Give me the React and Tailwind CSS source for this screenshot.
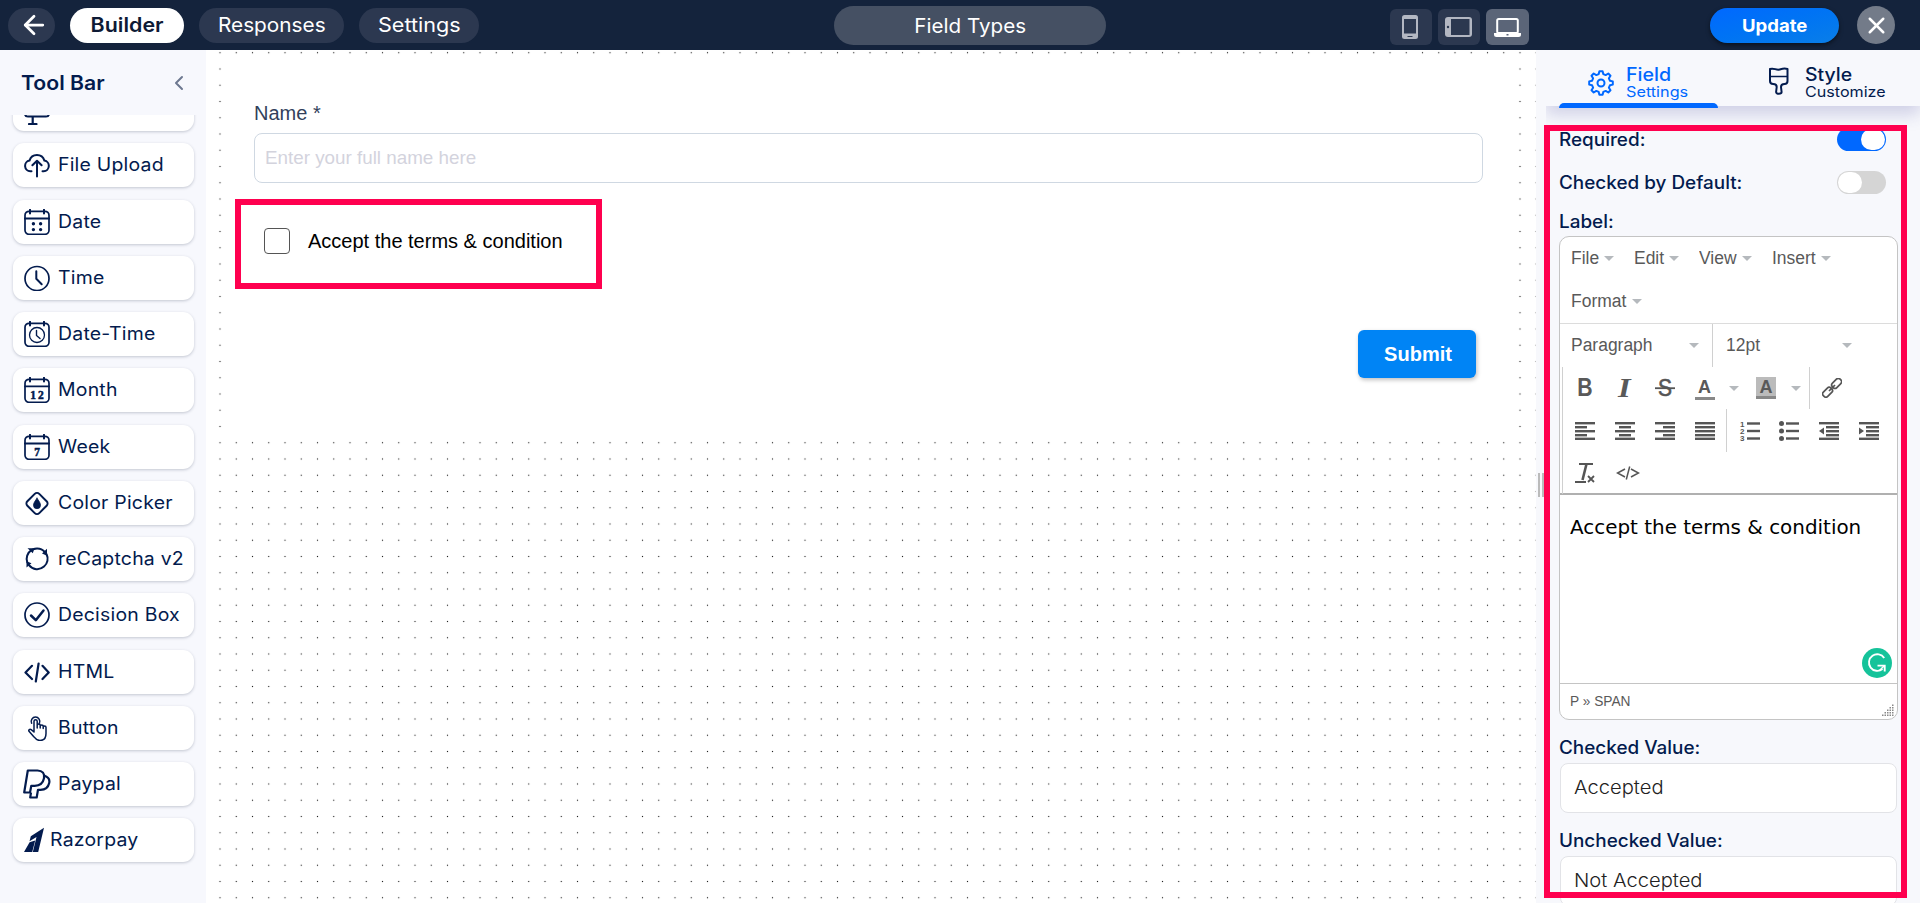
import React from "react";
import { ChevronLeft, ArrowLeft, X } from "lucide-react";

const svgProps = {
  viewBox: "0 0 26 26",
  fill: "none",
  stroke: "currentColor",
  strokeWidth: 1.7,
  strokeLinecap: "round",
  strokeLinejoin: "round",
};

function Glyph({ children }) {
  return (
    <svg {...svgProps} className="h-[26px] w-[26px] shrink-0">
      {children}
    </svg>
  );
}

const CalendarFrame = () => (
  <>
    <rect x="1" y="2.3" width="24" height="23" rx="4" />
    <path d="M6 .8v3.6M20 .8v3.6" strokeWidth="2" />
  </>
);

const digits = "fill-current stroke-current stroke-[0.5px] font-['Liberation_Serif'] font-bold";

const tools = [
  {
    label: "File Upload",
    icon: (
      <Glyph>
        <path d="M7.5 19.3H6.3a5.4 5.4 0 0 1-.8-10.7A7.8 7.8 0 0 1 20.4 8.6a5.4 5.4 0 0 1-.7 10.7h-1.2M13 24.5V9M8.4 13.3 13 8.7l4.6 4.6" strokeWidth="2" />
      </Glyph>
    ),
  },
  {
    label: "Date",
    icon: (
      <Glyph>
        <CalendarFrame />
        <path d="M1 9.6h24" strokeWidth="2" />
        <path d="M9.4 14.8h.01M16.6 14.8h.01M9.4 20.6h.01M16.6 20.6h.01" strokeWidth="3.4" />
      </Glyph>
    ),
  },
  {
    label: "Time",
    icon: (
      <Glyph>
        <circle cx="13" cy="13.5" r="12" />
        <path d="M12.3 6.3v7.5l5.4 5.5" strokeWidth="2" />
      </Glyph>
    ),
  },
  {
    label: "Date-Time",
    icon: (
      <Glyph>
        <CalendarFrame />
        <circle cx="13" cy="14" r="7.5" strokeWidth="1.3" />
        <path d="M12.5 9.5v5l3.5 3" strokeWidth="1.4" />
      </Glyph>
    ),
  },
  {
    label: "Month",
    icon: (
      <Glyph>
        <CalendarFrame />
        <path d="M1 9.4h24" />
        <text x="13" y="21.6" fontSize="11.5" textAnchor="middle" textLength="13.5" className={digits}>12</text>
      </Glyph>
    ),
  },
  {
    label: "Week",
    icon: (
      <Glyph>
        <CalendarFrame />
        <path d="M1 9.4h24" strokeWidth="2" />
        <text x="13" y="21.6" fontSize="11.5" textAnchor="middle" className={digits}>7</text>
      </Glyph>
    ),
  },
  {
    label: "Color Picker",
    icon: (
      <Glyph>
        <rect x="4.6" y="5.1" width="16.8" height="16.8" rx="3.2" transform="rotate(45 13 13.5)" strokeWidth="2" />
        <path d="M13 8.2c1.6 2.5 3.5 4.6 3.5 7a3.5 3.5 0 0 1-7 0c0-2.400 1.900-4.500 3.500-7z" fill="currentColor" strokeWidth=".8" />
      </Glyph>
    ),
  },
  {
    label: "reCaptcha v2",
    icon: (
      <Glyph>
        <path d="M5.500 5.800A10.200 10.200 0 0 1 20.800 6M22.600 8.300A10.200 10.200 0 0 1 20 20.600 10.300 10.300 0 0 1 5 19.200M3.300 16.500A10.200 10.200 0 0 1 7.500 4.200" strokeWidth="2" />
        <path d="M3.500 2.300h7l-1.700 5zM23 2.800v7l-5-2.300zM2.500 21.500v-6.300l5 2z" fill="currentColor" stroke="none" />
      </Glyph>
    ),
  },
  {
    label: "Decision Box",
    icon: (
      <Glyph>
        <circle cx="13" cy="13" r="12" />
        <path d="M7 13.500l4.800 4.700 7.700-9.700" strokeWidth="2.500" />
      </Glyph>
    ),
  },
  {
    label: "HTML",
    icon: (
      <Glyph>
        <path d="M8 6.800 1.500 13.400 8 20M18.500 6.800l6.200 6.600-6.200 6.600M14.600 4.500l-2.800 18" strokeWidth="2.200" />
      </Glyph>
    ),
  },
  {
    label: "Button",
    icon: (
      <Glyph>
        <path d="M10 16.500V6.300a1.600 1.600 0 0 1 3.200 0V12.500M13.200 13v-2.400a1.500 1.500 0 0 1 3 0V13M16.200 13v-1.600a1.500 1.500 0 0 1 3 0V13.500M19.200 13v-.7a1.400 1.400 0 0 1 2.800 0V18.500c0 4.500-2.500 7-6 7-3 0-4.400-1.500-6-3.600L5 16.300c-.8-1.500.8-2.700 2.200-1.600L10 17" strokeWidth="1.500" />
        <path d="M7.600 8.200a4.300 4.300 0 1 1 7.800 0" strokeWidth="1.500" />
      </Glyph>
    ),
  },
  {
    label: "Paypal",
    icon: (
      <svg viewBox="0 0 28 30" fill="none" stroke="currentColor" strokeWidth="2.200" strokeLinejoin="round" className="-mx-px h-[30px] w-7 shrink-0">
        <path d="M4.800 1.500H14.500c5 0 7.500 3.200 6.500 7.800-1 5-4.300 7.500-9.300 7.500H8.300L7 23.500H1.200z" />
        <path d="M21 6.500c4.500 1.500 6 4 5.200 7.500-1 4.600-4 6.800-8.700 6.800H15l-1.300 7.700H7.200L8 23.500" />
      </svg>
    ),
  },
  {
    label: "Razorpay",
    narrow: true,
    icon: (
      <svg viewBox="0 0 20 26" fill="currentColor" className="h-[26px] w-5 shrink-0">
        <path d="M20 .8 6.800 9.200 5.500 14.200 12.500 10 8.800 25h5.400zM5.600 15.200 0 25h8.200l3-11.500z" />
      </svg>
    ),
  },
];

function ToolItem({ label, icon, narrow }) {
  return (
    <li className="flex h-11 shrink-0 items-center rounded-[11px] bg-white pl-[11px] shadow-[0_1px_3px_rgba(40,50,80,0.25)]">
      {icon}
      <span className={`${narrow ? "ml-1.5" : "ml-2"} -mt-px origin-left scale-x-[1.080] text-[18px] whitespace-nowrap tracking-[0.2px]`}>{label}</span>
    </li>
  );
}

function Caret() {
  return <span className="border-x-[5px] border-t-[5px] border-x-transparent border-t-[#b5b9bd]" />;
}

function Toggle({ on }) {
  return (
    <span className={`flex h-[23px] w-[49px] items-center rounded-full p-px ${on ? "justify-end bg-[#0068ff]" : "bg-[#d5d5d5]"}`}>
      <span className="h-[21px] w-6 rounded-full bg-white" />
    </span>
  );
}

function Lines({ rows, children }) {
  return (
    <svg viewBox="0 0 20 20" className="h-5 w-5 overflow-visible" fill="#555">
      {rows.map(([x, y, w]) => (
        <rect key={`${x}-${y}`} x={x} y={y} width={w} height="2.400" />
      ))}
      {children}
    </svg>
  );
}

const five = (narrowX, narrowW) => [
  [0, 1, 20], [narrowX, 5, narrowW], [0, 9, 20], [narrowX, 13, narrowW], [0, 16.6, 20],
];

const listLines = [[7, 1.3, 13], [7, 8.8, 13], [7, 16.3, 13]];

function Cell({ children, className = "w-10" }) {
  return <span className={`flex shrink-0 items-center justify-center ${className}`}>{children}</span>;
}

function Editor() {
  return (
    <div className="flex h-[484px] flex-col overflow-hidden rounded-[10px] border border-[#c4c4c4] bg-white font-['Liberation_Sans'] text-[18px] text-[#595959]">
      <div className="flex h-[87px] shrink-0 flex-wrap border-b border-[#dcdcdc] pl-[11px]">
        {[["File", "w-[63px]"], ["Edit", "w-[65px]"], ["View", "w-[73px]"], ["Insert", "w-[80px]"], ["Format", "w-[90px]"]].map(([name, width]) => (
          <span key={name} className={`flex h-[43px] items-center gap-1 ${width}`}>
            <span className="origin-left scale-x-[0.970]">{name}</span>
            <Caret />
          </span>
        ))}
      </div>
      <div className="flex h-[43px] shrink-0">
        <div className="flex w-[153px] items-center justify-between border-r border-[#d0d0d0] pr-[13px] pl-[11px]">
          <span className="origin-left scale-x-[0.970]">Paragraph</span>
          <Caret />
        </div>
        <div className="flex w-[152px] items-center justify-between pr-[13px] pl-[13px]">
          <span className="origin-left scale-x-[0.970]">12pt</span>
          <Caret />
        </div>
      </div>
      <div className="flex h-[128px] shrink-0 flex-col border-b-2 border-[#b0b0b0]">
        <div className="ml-0.5 flex h-[127px] flex-col border-l border-[#d0d0d0]">
          <div className="flex h-[42px]">
            <Cell className="w-[42px] text-[25px] font-bold"><span className="scale-x-[0.850] pl-0.5">B</span></Cell>
            <Cell className="w-[39px] font-['Liberation_Serif'] text-[27px] font-bold italic"><span className="scale-x-[1.200]">I</span></Cell>
            <Cell className="w-[41px]">
              <svg viewBox="0 0 20 20" className="h-5 w-5 overflow-visible" fill="#555">
                <text x="10" y="18" fontSize="23" stroke="#555" strokeWidth=".6" textAnchor="middle" textLength="14" lengthAdjust="spacingAndGlyphs">S</text>
                <rect y="9.300" width="20" height="1.800" />
              </svg>
            </Cell>
            <Cell className="w-[39px]"><span className="mt-0.5 h-[22px] w-5 border-b-[3px] border-[#888] text-center text-[18px] leading-[18px] font-bold">A</span></Cell>
            <Cell className="w-[20px]"><Caret /></Cell>
            <Cell className="w-[44px]"><span className="h-[22px] w-5 border-b-[3px] border-[#888] bg-[#bbb] text-center text-[18px] leading-[20px] font-bold">A</span></Cell>
            <Cell className="w-[22px] justify-start border-r border-[#d0d0d0]"><span className="w-[3px]" /><Caret /></Cell>
            <Cell className="w-[43px]">
              <svg viewBox="0 0 20 20" className="h-5 w-5" fill="none" stroke="#555" strokeWidth="1.700">
                <rect x="-5.200" y="-3.100" width="10.800" height="6.200" rx="2.600" transform="translate(5.400 14.400) rotate(-45)" />
                <rect x="-5.200" y="-3.100" width="10.800" height="6.200" rx="2.600" transform="translate(14.500 5.500) rotate(-45)" />
                <path d="M7 13l6-6" />
              </svg>
            </Cell>
          </div>
          <div className="flex h-[43px] pl-0.5">
            <Cell><Lines rows={five(0, 12)} /></Cell>
            <Cell><Lines rows={five(4, 12)} /></Cell>
            <Cell><Lines rows={five(8, 12)} /></Cell>
            <Cell><Lines rows={five(0, 20)} /></Cell>
            <span className="ml-px w-px bg-[#d0d0d0]" />
            <Cell className="w-[45px]">
              <Lines rows={listLines}>
                {["1", "2", "3"].map((n, i) => (
                  <text key={n} x="0" y={6 + i * 7} fontSize="8" fontWeight="700">{n}</text>
                ))}
              </Lines>
            </Cell>
            <Cell className="w-[34px]">
              <Lines rows={listLines}>
                <circle cx="2.500" cy="2.500" r="2.500" /><circle cx="2.500" cy="10" r="2.500" /><circle cx="2.500" cy="17.500" r="2.500" />
              </Lines>
            </Cell>
            <Cell className="w-[46px]"><Lines rows={[[0, 1, 20], [7, 5, 13], [7, 9, 13], [7, 13, 13], [0, 16.6, 20]]}><path d="M5 6.500v7L0 10z" /></Lines></Cell>
            <Cell className="w-[34px]"><Lines rows={[[0, 1, 20], [7, 5, 13], [7, 9, 13], [7, 13, 13], [0, 16.6, 20]]}><path d="M0 6.500v7l5-3.500z" /></Lines></Cell>
          </div>
          <div className="flex h-[42px] pb-px pl-0.5">
            <Cell>
              <svg viewBox="0 0 20 20" className="h-5 w-5" fill="none" stroke="#555" strokeWidth="2">
                <path d="M4 1h14M0 19h11" /><path d="M11.500 1 7.500 17" strokeWidth="2.600" /><path d="M13 13l6 6M19 13l-6 6" strokeWidth="1.800" />
              </svg>
            </Cell>
            <Cell className="w-[45px]">
              <svg viewBox="0 0 24 16" className="h-4 w-6" fill="none" stroke="#555" strokeWidth="1.500">
                <path d="M9 4 1.500 8 9 12M15 4l7.500 4L15 12M13.700 1.500l-3.400 13" />
              </svg>
            </Cell>
          </div>
        </div>
      </div>
      <div className="flex flex-1 items-start pt-[18px] pl-2.5">
        <span className="origin-left scale-x-[0.996] font-['DejaVu_Sans'] text-[20px] leading-7 whitespace-nowrap text-black">Accept the terms &amp; condition</span>
      </div>
      <div className="flex justify-end pr-[5px] pb-[5px]">
        <svg viewBox="0 0 30 30" className="h-[30px] w-[30px]">
          <circle cx="15" cy="15" r="15" fill="#15c39a" />
          <path d="M22.200 10A8.300 8.300 0 1 0 20.500 21M15.500 17.600h7.200v6" fill="none" stroke="#fff" strokeWidth="1.900" />
          <path d="M22.500 17.500 17.500 22.500" stroke="#fff" strokeWidth="1.500" />
        </svg>
      </div>
      <div className="flex h-[36px] shrink-0 items-center justify-between border-t border-[#c4c4c4] pr-[3px] pl-2.5">
        <span className="origin-left scale-x-[0.980] text-[14px]">P » SPAN</span>
        <svg viewBox="0 0 12 12" className="mt-4 h-3 w-3" fill="#888">
          {[0, 1, 2, 3, 4].flatMap((c) => Array.from({ length: c + 1 }, (_, r) => <rect key={`${c}-${r}`} x={c * 2.5} y={10.5 - r * 2.5} width="1.500" height="1.500" />))}
        </svg>
      </div>
    </div>
  );
}

function FieldTitle({ children, className = "" }) {
  return <span className={`block origin-left scale-x-[1.050] text-[18px] leading-6 font-medium whitespace-nowrap ${className}`}>{children}</span>;
}

function ValueInput({ children }) {
  return (
    <div className="mt-[3px] ml-px flex h-[50px] w-[337px] items-center rounded-lg border border-[#e2e3e7] bg-white pl-[13px] text-[18.500px] font-light text-[#222]">
      <span className="origin-left scale-x-[1.090]">{children}</span>
    </div>
  );
}

function NavPill({ active, className, children }) {
  return (
    <span className={`flex h-[35px] items-center justify-center rounded-full pb-0.5 text-[20px] ${active ? "bg-white font-bold text-[#0e1a35]" : "bg-[#2c3850] text-white"} ${className}`}>
      {children}
    </span>
  );
}

function Header() {
  return (
    <header className="flex h-[50px] shrink-0 bg-[#14233c]">
      <nav className="flex w-[834px] gap-[15px] pt-2 pl-2">
        <NavPill className="w-[47px]"><ArrowLeft className="ml-1 h-[30px] w-[30px]" strokeWidth={2.2} /></NavPill>
        <NavPill active className="w-[114px]"><span className="scale-x-[1.070] font-semibold">Builder</span></NavPill>
        <NavPill className="w-[145px]"><span className="scale-x-[1.040]">Responses</span></NavPill>
        <NavPill className="w-[120px]"><span className="scale-x-[1.080]">Settings</span></NavPill>
      </nav>
      <div className="mt-1.5 flex h-[39px] w-[272px] items-center justify-center rounded-full bg-[#455063] text-[20px] text-white">
        <span className="scale-x-[1.030]">Field Types</span>
      </div>
      <div className="ml-[284px] flex gap-[6px] pt-[9px]">
        <span className="flex h-9 w-[42px] items-center justify-center rounded-md bg-[#2c3850]">
          <svg viewBox="0 0 16 24" className="-ml-0.5 h-6 w-4"><rect width="16" height="24" rx="2.500" fill="#b3b7c2" /><rect x="2" y="4" width="12" height="14.500" fill="#2c3850" /><rect x="5.500" y="21" width="5" height="1" fill="#2c3850" /></svg>
        </span>
        <span className="flex h-9 w-[42px] items-center justify-center rounded-md bg-[#2c3850]">
          <svg viewBox="0 0 27 20" className="-ml-0.5 h-5 w-[27px]"><rect width="27" height="20" rx="3" fill="#b3b7c2" /><rect x="6" y="2" width="18.500" height="16" fill="#2c3850" /><circle cx="3" cy="10" r="1.200" fill="#2c3850" /></svg>
        </span>
        <span className="flex h-9 w-[43px] items-center justify-center rounded-md bg-[#5b6578]">
          <svg viewBox="0 0 27 19" className="h-[19px] w-[27px]"><rect x="3.200" y="1" width="20.600" height="14" rx="1.500" fill="none" stroke="#fff" strokeWidth="2" /><path d="M0 15h27v1.500A2.500 2.500 0 0 1 24.500 19h-22A2.500 2.500 0 0 1 0 16.500z" fill="#fff" /><rect x="12.500" y="16" width="2" height="1.500" fill="#5b6578" /></svg>
        </span>
      </div>
      <span className="mt-2 ml-[181px] flex h-[35px] w-[129px] items-center justify-center rounded-full bg-linear-to-br from-[#0068ff] to-[#0a7ee8] text-[18px] font-bold text-white shadow-[0_2px_4px_rgba(0,0,0,0.5)]"><span className="scale-x-[1.030]">Update</span></span>
      <span className="mt-1.5 ml-[18px] flex h-[38px] w-[38px] items-center justify-center rounded-full bg-[#737b89] text-white"><X className="h-[27px] w-[27px]" strokeWidth={2.2} /></span>
    </header>
  );
}

function Sidebar() {
  return (
    <aside className="flex w-[206px] flex-col bg-[#f7f8fd]">
      <div className="flex h-[65px] shrink-0 items-center justify-between pr-[15px] pl-[21px]">
        <span className="origin-left scale-x-[1.060] text-[20px] font-semibold">Tool Bar</span>
        <ChevronLeft className="h-6 w-6 text-[#6d7890]" />
      </div>
      <div className="h-[788px] overflow-hidden px-[13px] pr-3">
        <ul className="-mt-7 flex flex-col gap-[12.250px]">
          <li className="flex h-11 shrink-0 items-end rounded-[11px] bg-white pb-1.5 pl-[11px] shadow-[0_1px_3px_rgba(40,50,80,0.25)]">
            <Glyph><rect x="1" y="2" width="24" height="15.500" rx="3" strokeWidth="2" /><path d="M5 25h7.500M8.700 18v7" strokeWidth="2.200" /></Glyph>
          </li>
          {tools.map((tool) => <ToolItem key={tool.label} {...tool} />)}
        </ul>
      </div>
    </aside>
  );
}

function Canvas() {
  return (
    <main className="w-[1330px] bg-white bg-[radial-gradient(circle,#222_0.5px,transparent_1px)] bg-size-[16.250px_16.250px] bg-position-[5.875px_-5.400px] pt-[7px] pl-[18px] font-['Liberation_Sans']">
      <div className="h-[383px] w-[1291px] bg-white pt-11 pl-[30px]">
        <div className="h-[32px] text-[20px] leading-6 text-[#323f5c]"><span className="inline-block origin-left">Name *</span></div>
        <div className="flex h-[50px] w-[1229px] items-center rounded-lg border border-[#cfd8e2] pl-[10px] text-[19px] text-[#d3d3dd]"><span className="origin-left scale-x-[0.990] whitespace-nowrap">Enter your full name here</span></div>
        <div className="mt-[16px] -ml-[19px] flex h-[90px] w-[367px] items-center border-[6px] border-[#ff004f] pb-1.5 pl-[23px]">
          <span className="h-[26px] w-[26px] rounded border border-[#555]" />
          <span className="ml-[18px] text-[20px] whitespace-nowrap text-black">Accept the terms &amp; condition</span>
        </div>
        <div className="mt-[41px] ml-[1104px] flex h-[48px] w-[118px] items-center justify-center rounded-md bg-[#0084f5] pl-0.5 text-[20px] font-bold text-white shadow-[1px_2px_4px_rgba(0,0,0,0.25)]">Submit</div>
      </div>
    </main>
  );
}

function SettingsPanel() {
  return (
    <aside className="flex w-[384px] overflow-hidden bg-[#f7f8fc]">
      <div className="flex w-2.5 items-center pt-[17px] pl-0.5">
        <span className="h-6 w-1.5 shrink-0 border-x-2 border-[#bbb]" />
      </div>
      <div className="flex w-[374px] flex-col overflow-hidden">
        <div className="relative z-10 flex h-14 shrink-0 bg-[#f7f8fc] pl-[13px] shadow-[0_8px_16px_rgba(60,60,150,0.22)]">
          <div className="relative flex w-[159px] pt-[19px] pl-[29px] text-[#0068ff]">
            <svg viewBox="0 0 26 26" className="mt-px h-[26px] w-[26px] shrink-0" fill="none" stroke="currentColor" strokeWidth="2" strokeLinejoin="round">
              <path d="M10.700 4.100 11.400 1.200h3.200l.7 2.900 2.400 1 2.600-1.600 2.200 2.200-1.600 2.600 1 2.400 2.900.7v3.200l-2.900.7-1 2.400 1.600 2.600-2.200 2.200-2.600-1.600-2.400 1-.7 2.900h-3.200l-.7-2.900-2.400-1-2.600 1.600-2.200-2.200 1.600-2.600-1-2.400-2.900-.7v-3.200l2.900-.7 1-2.400-1.600-2.600 2.200-2.200 2.600 1.600z" />
              <circle cx="13" cy="13" r="3.500" />
            </svg>
            <div className="-mt-[4px] ml-[12px] flex flex-col">
              <span className="origin-left scale-x-[1.090] text-[18px] leading-5 font-medium">Field</span>
              <span className="-mt-px origin-left scale-x-[1.120] text-[14.500px] leading-4">Settings</span>
            </div>
            <span className="absolute -bottom-0.5 left-0 h-[5px] w-[159px] rounded-t-lg bg-[#0068ff]" />
          </div>
          <div className="flex pt-[17px] pl-[50px]">
            <svg viewBox="0 0 22 28" className="h-7 w-[22px] shrink-0" fill="none" stroke="currentColor" strokeWidth="2" strokeLinejoin="round">
              <path d="M2 2c4-1.500 6 1.500 9.500.5 3-.8 4.500-1.500 8-.5v12c0 2-1 3-3 3-2.500 0-3.500 1-3.500 3l.6 5c0 2.400-5.600 2.400-5.500 0l.6-5c0-2-1-3-3.500-3-2.200 0-3.200-1-3.200-3z" />
              <path d="M2 9.500h17.500" strokeWidth="1.500" />
            </svg>
            <div className="-mt-[2px] ml-[15px] flex flex-col">
              <span className="origin-left scale-x-[1.080] text-[18px] leading-5 font-medium">Style</span>
              <span className="-mt-px origin-left scale-x-[1.110] text-[14.500px] leading-4">Customize</span>
            </div>
          </div>
        </div>
        <div className="h-[797px] overflow-hidden pt-[22px] pl-[13px]">
          <div className="w-[339px]">
            <div className="flex h-[23px] items-center justify-between pr-3"><FieldTitle>Required:</FieldTitle><Toggle on /></div>
            <div className="mt-5 flex h-[23px] items-center justify-between pr-3"><FieldTitle>Checked by Default:</FieldTitle><Toggle /></div>
            <FieldTitle className="mt-4 mb-0.5">Label:</FieldTitle>
            <Editor />
            <FieldTitle className="mt-[16px]">Checked Value:</FieldTitle>
            <ValueInput>Accepted</ValueInput>
            <FieldTitle className="mt-[16px]">Unchecked Value:</FieldTitle>
            <ValueInput>Not Accepted</ValueInput>
          </div>
        </div>
      </div>
    </aside>
  );
}

export default function App() {
  return (
    <div className="relative flex h-[903px] w-[1920px] flex-col overflow-hidden font-['Inter',sans-serif] text-[#031b4e]">
      <Header />
      <div className="flex h-[853px]">
        <Sidebar />
        <Canvas />
        <SettingsPanel />
      </div>
      <div className="pointer-events-none absolute top-[125px] left-[1544px] z-20 h-[773px] w-[363px] border-[6px] border-[#ff004f]" />
    </div>
  );
}
